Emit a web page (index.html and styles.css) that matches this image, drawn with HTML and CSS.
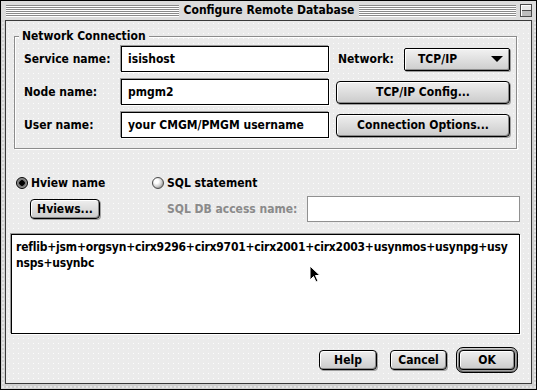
FILE: index.html
```html
<!DOCTYPE html>
<html lang="en">
<head>
<meta charset="UTF-8">
<title>Configure Remote Database</title>
<link rel="stylesheet" href="styles.css">
</head>
<body>
<div class="window">
	<div class="titlebar">
		<div class="stripes"></div>
		<div class="title">Configure Remote Database</div>
		<div class="title-right">
			<div class="stripes"></div>
			<div class="collapse"></div>
		</div>
	</div>

	<div class="content">
		<div class="group">
			<div class="group-title">Network Connection</div>
			<div class="form">
				<div class="label">Service name:</div>
				<div class="edit">isishost</div>
				<div class="side">
					<span class="net-label">Network:</span>
					<div class="popup"><span>TCP/IP</span><span class="arrow"></span></div>
				</div>

				<div class="label">Node name:</div>
				<div class="edit">pmgm2</div>
				<div class="side"><div class="btn wide">TCP/IP Config...</div></div>

				<div class="label">User name:</div>
				<div class="edit">your CMGM/PMGM username</div>
				<div class="side"><div class="btn wide">Connection Options...</div></div>
			</div>
		</div>

		<div class="options">
			<div class="radio on"><span class="dot"></span>Hview name</div>
			<div class="radio"><span class="dot"></span>SQL statement</div>
			<div class="opt-left"><div class="btn hviews">Hviews...</div></div>
			<div class="opt-right">
				<span class="dim">SQL DB access name:</span>
				<div class="edit off"></div>
			</div>
		</div>

		<div class="textbox">reflib+jsm+orgsyn+cirx9296+cirx9701+cirx2001+cirx2003+usynmos+usynpg+usynsps+usynbc</div>

		<div class="actions">
			<div class="btn small help">Help</div>
			<div class="btn small cancel">Cancel</div>
			<div class="ring"><div class="btn small ok">OK</div></div>
		</div>
	</div>

	<svg class="cursor" width="12" height="19" viewBox="0 0 12 19">
		<path d="M1 1 L1 15 L4.5 11.5 L7 17 L9 16 L6.5 10.5 L11 10.5 Z" fill="#000" stroke="#fff" stroke-width="1"/>
	</svg>
</div>
</body>
</html>
```

FILE: styles.css
```css
*{
	margin: 0;
	padding: 0;
	box-sizing: border-box;
}
html,body{
	width: 100%;
	height: 100%;
}
body{
	background: #fff;
	color: #000;
	font-family: "DejaVu Sans Condensed", "DejaVu Sans", sans-serif;
	font-weight: bold;
	font-size: 12px;
}

.window{
	position: relative;
	width: 537px;
	height: 390px;
	border: 1px solid #000;
	background-color: #d0d0d0;
	background-image: radial-gradient(circle, rgba(255,255,255,0.7) 0.6px, transparent 0.9px);
	background-size: 4px 4px;
	display: flex;
	flex-direction: column;
}

/* title bar */
.titlebar{
	height: 19px;
	display: grid;
	grid-template-columns: 1fr auto 1fr;
	align-items: center;
	padding: 0 4px 0 5px;
	background: #dcdcdc;
}
.stripes{
	height: 12px;
	background: repeating-linear-gradient(#8a8a8a 0 1px, #fff 1px 2px);
}
.title{
	padding: 0 5px;
	line-height: 19px;
	white-space: nowrap;
}
.title-right{
	display: flex;
	align-items: center;
	gap: 4px;
}
.title-right .stripes{
	flex: 1;
}
.collapse{
	width: 12px;
	height: 13px;
	border: 1px solid #4a4a4a;
	background: linear-gradient(#e8e8e8 0 5px, #4a4a4a 5px 6px, #bdbdbd 6px);
	box-shadow: inset 1px 1px 0 #fff;
}

/* dialog body */
.content{
	flex: 1;
	margin: 0 4px 5px 4px;
	border: 1px solid #3a3a3a;
	background-color: #ebebeb;
	background-image: radial-gradient(circle, rgba(255,255,255,0.9) 0.6px, transparent 0.9px);
	background-size: 5px 5px;
	display: flex;
	flex-direction: column;
}

.group{
	margin: 15px 14px 0 8px;
	padding: 0 6px 10px 9px;
	border: 1px solid #8c8c8c;
	box-shadow: inset 1px 1px 0 #fff, 1px 1px 0 #fff;
}
.group-title{
	width: max-content;
	margin: -8px 0 0 -5px;
	padding: 0 3px;
	line-height: 14px;
	background: #ebebeb;
}
.form{
	margin-top: 3px;
	display: grid;
	grid-template-columns: 90px 208px 174px;
	grid-auto-rows: 26px;
	column-gap: 7px;
	row-gap: 7px;
	align-items: center;
}
.label{
	white-space: nowrap;
}
.edit{
	height: 26px;
	border: 1px solid #000;
	background: #fff;
	padding: 0 6px;
	line-height: 24px;
	white-space: nowrap;
	overflow: hidden;
	box-shadow: -1px -1px 0 #9a9a9a, 1px 1px 0 #fff;
}
.edit.off{
	width: 213px;
	margin-left: auto;
	border-color: #909090;
	box-shadow: none;
}
.side{
	display: flex;
	align-items: center;
}
.net-label{
	margin-left: 2px;
}
.popup{
	margin-left: auto;
	width: 106px;
	height: 23px;
	border: 1px solid #000;
	border-radius: 2px;
	background: linear-gradient(#f2f2f2, #cdcdcd);
	box-shadow: inset 1px 1px 0 #fff, inset -1px -1px 0 #8e8e8e, 1px 1px 0 #9a9a9a;
	display: flex;
	align-items: center;
	padding: 0 6px 0 13px;
}
.arrow{
	margin-left: auto;
	width: 0;
	height: 0;
	border-left: 6px solid transparent;
	border-right: 6px solid transparent;
	border-top: 6px solid #000;
}

.btn{
	height: 23px;
	border: 1px solid #000;
	border-radius: 4px;
	background: linear-gradient(#efefef, #cbcbcb);
	box-shadow: inset 1px 1px 0 #fff, inset -1px -1px 0 #8a8a8a, 1px 1px 0 #a0a0a0;
	display: flex;
	align-items: center;
	justify-content: center;
	white-space: nowrap;
}
.btn.wide{
	width: 100%;
}

/* radio area */
.options{
	margin: 26px 11px 0 10px;
	display: grid;
	grid-template-columns: 136px 1fr;
	grid-template-rows: 15px 26px;
	row-gap: 6px;
	align-items: center;
}
.radio{
	display: flex;
	align-items: center;
	gap: 3px;
	white-space: nowrap;
}
.dot{
	width: 12px;
	height: 12px;
	border-radius: 50%;
	border: 1px solid #4a4a4a;
	background: radial-gradient(circle at 35% 35%, #fff 0 2px, #cfcfcf 5px, #9a9a9a 7px);
}
.radio.on .dot{
	border-color: #000;
	background: radial-gradient(circle, #000 0 2.5px, #6a6a6a 3px, #9a9a9a 5px, #3a3a3a 6px);
}
.opt-left{
	display: flex;
	align-items: center;
}
.btn.hviews{
	margin-left: 14px;
	width: 70px;
	height: 20px;
}
.opt-right{
	display: flex;
	align-items: center;
}
.dim{
	margin-left: 15px;
	color: #8a8a8a;
	white-space: nowrap;
}

.textbox{
	margin: 12px 11px 0 5px;
	height: 100px;
	border: 1px solid #000;
	background: #fff;
	padding: 4px 4px;
	line-height: 16px;
	letter-spacing: -0.2px;
	word-break: break-all;
	box-shadow: -1px -1px 0 #9a9a9a, 1px 1px 0 #fff;
}

.actions{
	margin: 13px 13px 0 0;
	display: flex;
	justify-content: flex-end;
	align-items: center;
}
.btn.small{
	height: 20px;
}
.help{
	width: 58px;
}
.cancel{
	width: 57px;
	margin-left: 13px;
}
.ring{
	margin-left: 9px;
	padding: 2px;
	border: 1px solid #000;
	border-radius: 7px;
	background: linear-gradient(#9c9c9c, #6e6e6e);
	box-shadow: inset 1px 1px 0 #d0d0d0;
}
.ok{
	width: 56px;
}

.cursor{
	position: absolute;
	left: 308px;
	top: 264px;
}
```
